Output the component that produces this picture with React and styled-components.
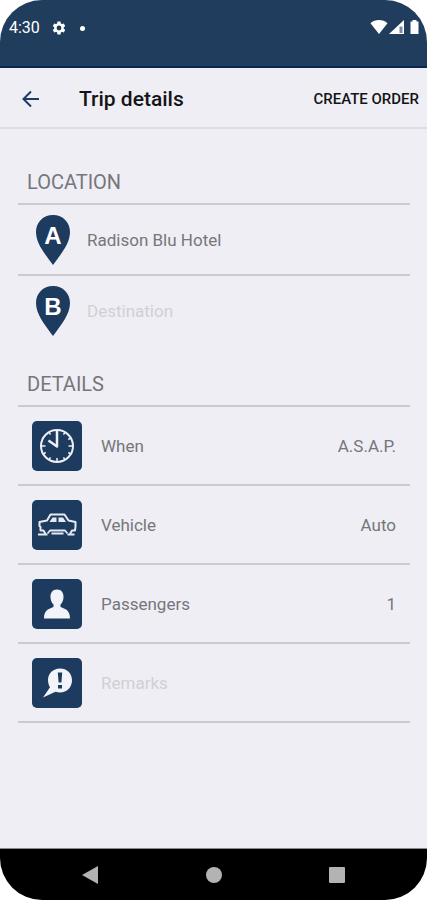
import { useState } from "react";
import styled, { createGlobalStyle } from "styled-components";

const GlobalStyle = createGlobalStyle`
  *, *::before, *::after {
    box-sizing: border-box;
  }

  body {
    margin: 0;
    background: #ffffff;
    font-family: Roboto, "Liberation Sans", sans-serif;
  }
`;

const GearIcon = () => (
  <svg width="16" height="16" viewBox="0 0 24 24" fill="#fff" aria-hidden="true">
    <path d="M19.14 12.94c.04-.3.06-.61.06-.94 0-.32-.02-.64-.07-.94l2.03-1.58a.49.49 0 0 0 .12-.61l-1.92-3.32a.49.49 0 0 0-.59-.22l-2.39.96c-.5-.38-1.03-.7-1.62-.94l-.36-2.54a.48.48 0 0 0-.48-.41h-3.84c-.24 0-.43.17-.47.41l-.36 2.54c-.59.24-1.13.57-1.62.94l-2.39-.96a.49.49 0 0 0-.59.22L2.74 8.87c-.12.21-.08.47.12.61l2.03 1.58c-.05.3-.09.63-.09.94s.02.64.07.94l-2.03 1.58a.49.49 0 0 0-.12.61l1.92 3.32c.12.22.37.29.59.22l2.39-.96c.5.38 1.03.7 1.62.94l.36 2.54c.05.24.24.41.48.41h3.84c.24 0 .44-.17.47-.41l.36-2.54c.59-.24 1.13-.56 1.62-.94l2.39.96c.22.08.47 0 .59-.22l1.92-3.32a.49.49 0 0 0-.12-.61l-2.01-1.58zM12 15.6a3.6 3.6 0 1 1 0-7.2 3.6 3.6 0 0 1 0 7.2z" />
  </svg>
);

const SignalIcons = () => (
  <svg width="49" height="16" viewBox="0 0 49 16" fill="#fff" aria-hidden="true">
    <path d="M0.5 4.2C5 0 13 0 17.500 4.2L9 15z" />
    <path d="M34 1V15H19z" />
    <path d="M29.500 7.500H32.500V14H29.500z" fill="#203d5e" opacity="0.6" />
    <path d="M42.500 1h4v1.500h2V15h-8V2.500h2z" />
  </svg>
);

const BackArrow = () => (
  <svg width="18" height="18" viewBox="0 0 18 18" fill="none" aria-hidden="true">
    <path d="M17 9H2M9 1.500L1.500 9L9 16.500" stroke="#203a66" strokeWidth="2" />
  </svg>
);

const Pin = ({ letter }) => (
  <svg width="34" height="50" viewBox="0 0 34 50" aria-hidden="true">
    <path
      d="M17 0C7 0 0 7.500 0 17c0 11.500 9 22 17 33 8-11 17-21.500 17-33C34 7.500 27 0 17 0z"
      fill="#1d3a5f"
    />
    <PinLetter x="17" y="29" textAnchor="middle">
      {letter}
    </PinLetter>
  </svg>
);

const ClockIcon = () => (
  <svg width="50" height="50" viewBox="0 0 50 50" fill="none" stroke="#eef0f6" aria-hidden="true">
    <circle cx="25" cy="25" r="16" strokeWidth="2" />
    <path d="M25 9.500V25.500L16.500 19.500" strokeWidth="2.500" strokeLinejoin="round" />
    <path
      d="M25 37v4M9 25h4.500M36.500 25H41M17 38.900l1.500-2.600M33 38.900l-1.500-2.600M11.100 33l2.600-1.500M38.900 33l-2.600-1.500M38.900 17l-2.600 1.500M33 11.100l-1.500 2.600M17 11.100l1.500 2.600"
      strokeWidth="1.500"
    />
  </svg>
);

const CarIcon = () => (
  <svg width="50" height="50" viewBox="0 0 50 50" fill="none" stroke="#e6ebf3" aria-hidden="true">
    <path
      d="M13.500 34L11.500 30.500H8.500V27L7.500 26V22L15 20.500L18.500 14.500H32.500L36.500 20.500L43.500 22V26.500L43 30.500H40L38 34"
      strokeWidth="2"
      strokeLinejoin="round"
    />
    <path
      d="M15.500 33.500L18 30.500H33L35.500 33.500M19.500 33.500H31.500"
      strokeWidth="1.800"
      strokeLinejoin="round"
    />
    <path d="M17.500 22L20.500 17.500H24.500V22zM26.500 17.500H31L34 22H26.500z" fill="#e6ebf3" stroke="none" />
    <path d="M6 34.500H15.500M35.500 34.500H42.500" strokeWidth="2" />
  </svg>
);

const PersonIcon = () => (
  <svg width="50" height="50" viewBox="0 0 50 50" fill="#f3f4f9" aria-hidden="true">
    <path d="M25 10.500c-4.500 0-6.800 3.500-6.500 8 .2 3 1.300 5.500 3 7v2.500c-3.500 1.800-9.500 2-9.500 11.500h26c0-9.500-6-9.700-9.500-11.500v-2.500c1.700-1.500 2.800-4 3-7 .3-4.500-2-8-6.500-8z" />
  </svg>
);

const RemarkIcon = () => (
  <svg width="50" height="50" viewBox="0 0 50 50" aria-hidden="true">
    <path
      d="M28 10.500c-7 0-12 5-12 11.500 0 3 .8 5.300 2 7.200L11 39.500l12.500-5.800c1.400.5 3 .8 4.500.8 7 0 12-5.500 12-12.300S35 10.500 28 10.500z"
      fill="#f3f4f9"
    />
    <path d="M25.800 14.500h4.400l-.8 10h-2.800zM26 27h4v3.500h-4z" fill="#1d3a5f" />
  </svg>
);

const options = [
  { id: 0, label: "When", value: "A.S.A.P.", Icon: ClockIcon },
  { id: 1, label: "Vehicle", value: "Auto", Icon: CarIcon },
  { id: 2, label: "Passengers", value: "1", Icon: PersonIcon },
];

const App = () => {
  const [pickup, setPickup] = useState("Radison Blu Hotel");
  const [destination, setDestination] = useState("");
  const [remarks, setRemarks] = useState("");

  return (
    <Phone>
      <GlobalStyle />
      <StatusBar>
        <StatusGroup>
          <span>4:30</span>
          <GearIcon />
          <Dot />
        </StatusGroup>
        <SignalIcons />
      </StatusBar>

      <Header>
        <BackButton type="button" aria-label="Back">
          <BackArrow />
        </BackButton>
        <Title>Trip details</Title>
        <CreateButton type="button">CREATE ORDER</CreateButton>
      </Header>

      <Content>
        <section>
          <SectionTitle>LOCATION</SectionTitle>
          <LocationRow $line>
            <Pin letter="A" />
            <Field
              aria-label="Pickup"
              value={pickup}
              onChange={(e) => setPickup(e.target.value)}
            />
          </LocationRow>
          <LocationRow>
            <Pin letter="B" />
            <Field
              aria-label="Destination"
              placeholder="Destination"
              value={destination}
              onChange={(e) => setDestination(e.target.value)}
            />
          </LocationRow>
        </section>

        <section>
          <SectionTitle>DETAILS</SectionTitle>
          {options.map(({ id, label, value, Icon }) => (
            <OptionRow as="button" type="button" key={id}>
              <Tile>
                <Icon />
              </Tile>
              <span>{label}</span>
              <OptionValue>{value}</OptionValue>
            </OptionRow>
          ))}
          <OptionRow>
            <Tile>
              <RemarkIcon />
            </Tile>
            <Field
              aria-label="Remarks"
              placeholder="Remarks"
              value={remarks}
              onChange={(e) => setRemarks(e.target.value)}
            />
          </OptionRow>
        </section>
      </Content>

      <NavBar>
        <NavButton type="button" aria-label="Back">
          <svg width="18" height="20" viewBox="0 0 18 20">
            <path d="M17 1V19L1 10z" fill="#b3b3b3" />
          </svg>
        </NavButton>
        <NavButton type="button" aria-label="Home">
          <svg width="18" height="20" viewBox="0 0 18 20">
            <circle cx="9" cy="10" r="8" fill="#b3b3b3" />
          </svg>
        </NavButton>
        <NavButton type="button" aria-label="Recent apps">
          <svg width="18" height="20" viewBox="0 0 18 20">
            <rect x="1" y="2" width="16" height="16" rx="1" fill="#b3b3b3" />
          </svg>
        </NavButton>
      </NavBar>
    </Phone>
  );
};

const Phone = styled.div`
  display: flex;
  flex-direction: column;
  min-height: 100vh;
  overflow: hidden;
  border-radius: 42px;
  background: #efeef4;
  color: #76767b;
  font-size: 17px;
  line-height: 24px;
`;

const StatusBar = styled.div`
  display: flex;
  justify-content: space-between;
  align-items: flex-start;
  height: 68px;
  padding: 19px 8px 0 9px;
  background: #203d5e;
  border-bottom: 2px solid #0c2550;
  color: #ffffff;
  font-size: 16px;
  line-height: 18px;
`;

const StatusGroup = styled.div`
  display: flex;
  align-items: center;
  gap: 11px;
`;

const Dot = styled.span`
  width: 5px;
  height: 5px;
  margin-left: 2px;
  border-radius: 50%;
  background: #ffffff;
`;

const Header = styled.header`
  display: flex;
  align-items: center;
  height: 61px;
  padding: 3px 8px 0 22px;
  border-bottom: 2px solid #dddce2;
  color: #141416;
`;

const BackButton = styled.button`
  display: flex;
  padding: 0;
  border: none;
  background: none;
  cursor: pointer;
`;

const Title = styled.h1`
  flex: 1;
  margin: 0 0 0 39px;
  font-size: 21px;
  font-weight: 500;
  line-height: 28px;
`;

const CreateButton = styled.button`
  padding: 0;
  border: none;
  background: none;
  color: inherit;
  font-family: inherit;
  font-size: 15px;
  font-weight: 500;
  line-height: 20px;
  cursor: pointer;
`;

const Content = styled.main`
  display: flex;
  flex: 1;
  flex-direction: column;
  gap: 15px;
  padding: 29px 17px 0 18px;
`;

const SectionTitle = styled.h2`
  margin: 0;
  padding: 12px 9px 9px;
  border-bottom: 2px solid #cbcad0;
  font-size: 20px;
  font-weight: 400;
  line-height: 24px;
`;

const LocationRow = styled.label`
  display: flex;
  align-items: center;
  gap: 17px;
  height: ${(props) => (props.$line ? "71px" : "69px")};
  padding: 0 18px;
  border-bottom: ${(props) => (props.$line ? "2px solid #cbcad0" : "none")};
`;

const OptionRow = styled.label`
  display: flex;
  align-items: center;
  gap: 19px;
  width: 100%;
  height: 79px;
  padding: 0 14px;
  border: none;
  border-bottom: 2px solid #cbcad0;
  background: none;
  color: inherit;
  font: inherit;
  text-align: left;
  cursor: pointer;
`;

const Tile = styled.span`
  display: flex;
  flex-shrink: 0;
  width: 50px;
  height: 50px;
  border-radius: 5px;
  background: #1d3a5f;
`;

const OptionValue = styled.span`
  margin-left: auto;
`;

const Field = styled.input`
  flex: 1;
  min-width: 0;
  padding: 0;
  border: none;
  outline: none;
  background: none;
  color: inherit;
  font: inherit;

  &::placeholder {
    color: #d0d0d6;
    opacity: 1;
  }
`;

const PinLetter = styled.text`
  fill: #ffffff;
  font-family: "Liberation Sans", Arial, sans-serif;
  font-size: 24px;
  font-weight: 700;
`;

const NavBar = styled.nav`
  display: flex;
  justify-content: space-between;
  align-items: center;
  height: 52px;
  padding: 0 81px;
  border-top: 1px solid #8a8a8c;
  background: #000000;
`;

const NavButton = styled.button`
  display: flex;
  padding: 0;
  border: none;
  background: none;
  cursor: pointer;
`;

export default App;
